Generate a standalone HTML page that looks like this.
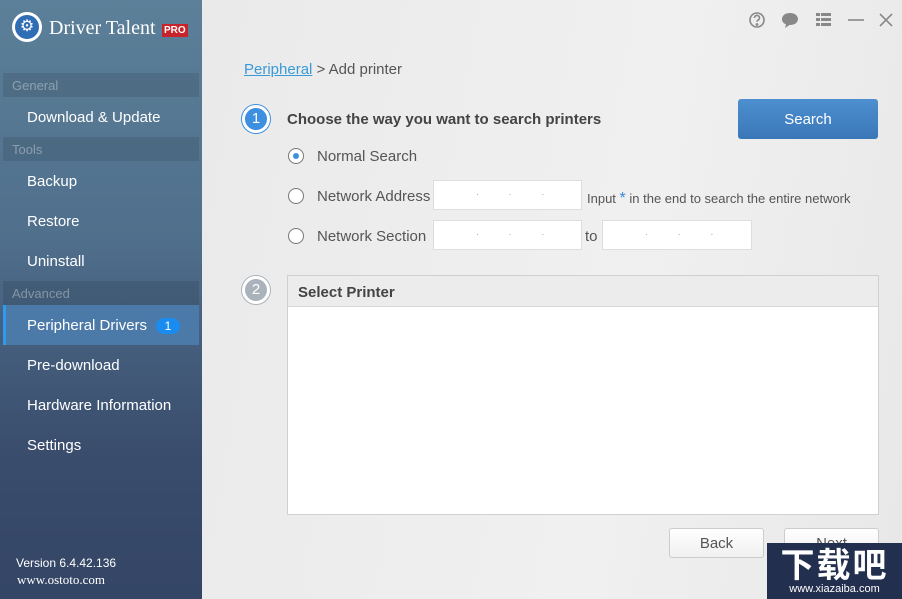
<!DOCTYPE html>
<html><head><meta charset="utf-8"><style>
*{margin:0;padding:0;box-sizing:border-box}
body{width:902px;height:599px;overflow:hidden;font-family:"Liberation Sans",sans-serif;background:#ececec;position:relative}
.side{position:absolute;left:0;top:0;width:202px;height:599px;background:linear-gradient(#5c8099 0%,#4f6f8c 40%,#3a4d6d 75%,#344565 100%)}
.sec{position:absolute;left:3px;width:196px;height:24px;background:rgba(0,0,0,.1);color:rgba(255,255,255,.35);font-size:13px;padding:5px 9px}
.it{position:absolute;left:27px;color:#fff;font-size:15px}
.main{position:absolute;left:202px;top:0;right:0;bottom:0;background:linear-gradient(100deg,#eaeaea,#f0f0f0 60%,#e8e8e8)}
.t{position:absolute;font-size:15px;color:#555;white-space:nowrap}
.in{position:absolute;background:#fff;border:1px solid #ddd;height:30px;color:#aaa;font-size:10px;letter-spacing:30px;padding:6px 0 0 42px}
.rad{position:absolute;width:16px;height:16px;border:1px solid #777;border-radius:50%;background:#fff}
.num{position:absolute;width:28px;height:28px;border-radius:50%;color:#fff;font-size:15px;text-align:center;line-height:22px;border:3px solid #fff}
.btn{position:absolute;border:1px solid #ccc;border-radius:3px;background:linear-gradient(#fff,#f0f0f0);color:#555;font-size:15px;text-align:center;line-height:30px}
</style></head><body>
<div class="side">
 <div style="position:absolute;left:12px;top:12px;width:30px;height:30px;border-radius:50%;background:#fff;padding:3px"><div style="width:24px;height:24px;border-radius:50%;background:#2f6db5;color:#fff;font-size:16px;text-align:center;line-height:24px">⚙</div></div>
 <div style="position:absolute;left:49px;top:17px;color:#fff;font-family:'Liberation Serif',serif;font-size:20px">Driver Talent</div>
 <div style="position:absolute;left:162px;top:24px;background:#c8232a;color:#fff;font-size:10px;font-weight:bold;padding:1px 2px">PRO</div>
 <div class="sec" style="top:73px">General</div>
 <div class="it" style="top:109px">Download &amp; Update</div>
 <div class="sec" style="top:137px">Tools</div>
 <div class="it" style="top:173px">Backup</div>
 <div class="it" style="top:213px">Restore</div>
 <div class="it" style="top:253px">Uninstall</div>
 <div class="sec" style="top:281px">Advanced</div>
 <div style="position:absolute;left:3px;top:305px;width:196px;height:40px;background:#4c7aa8;border-left:3px solid #2d9cf0"></div>
 <div class="it" style="top:317px">Peripheral Drivers</div>
 <div style="position:absolute;left:156px;top:318px;width:24px;height:16px;border-radius:8px;background:#1a8cf0;color:#fff;font-size:12px;text-align:center;line-height:16px">1</div>
 <div class="it" style="top:357px">Pre-download</div>
 <div class="it" style="top:397px">Hardware Information</div>
 <div class="it" style="top:437px">Settings</div>
 <div style="position:absolute;left:16px;top:556px;color:#fff;font-size:12px">Version 6.4.42.136</div>
 <div style="position:absolute;left:17px;top:572px;color:#fff;font-size:13px;font-family:'Liberation Serif',serif">www.ostoto.com</div>
</div>
<div class="main">
 <svg style="position:absolute;left:540px;top:8px" width="160" height="24" viewBox="0 0 160 24" fill="none" stroke="#888" stroke-width="1.6">
  <circle cx="15" cy="12" r="7"/><path d="M12.5 10a2.5 2.5 0 1 1 3.5 2.2c-.8.4-1 .9-1 1.6"/><circle cx="15" cy="16.5" r=".6" fill="#888"/>
  <path d="M48 5c-5 0-8 2.8-8 6s2 4.5 4 5.3L43 20l4.5-3h.5c5 0 8-2.8 8-6s-3-6-8-6z" fill="#888" stroke="none"/>
  <g fill="#888" stroke="none"><rect x="74" y="5" width="4" height="3"/><rect x="79" y="5" width="10" height="3"/><rect x="74" y="10" width="4" height="3"/><rect x="79" y="10" width="10" height="3"/><rect x="74" y="15" width="4" height="3"/><rect x="79" y="15" width="10" height="3"/></g>
  <path d="M106 12h16"/><path d="M138 6l12 12M150 6l-12 12"/>
 </svg>
 <div class="t" style="left:42px;top:61px"><span style="color:#3a9ad9;text-decoration:underline">Peripheral</span> &gt; Add printer</div>
 <div class="num" style="left:40px;top:105px;background:#3d8fe0;box-shadow:0 0 0 1px #3d8fe0">1</div>
 <div class="t" style="left:85px;top:111px;font-weight:bold;color:#444">Choose the way you want to search printers</div>
 <div style="position:absolute;left:536px;top:99px;width:140px;height:40px;background:linear-gradient(#4d8fd0,#3a77b8);border-radius:3px;color:#fff;font-size:15px;text-align:center;line-height:42px">Search</div>
 <div class="rad" style="left:86px;top:148px"><div style="width:6px;height:6px;border-radius:50%;background:#3d8fe0;margin:4px"></div></div>
 <div class="t" style="left:115px;top:148px">Normal Search</div>
 <div class="rad" style="left:86px;top:188px"></div>
 <div class="t" style="left:115px;top:188px">Network Address</div>
 <div class="in" style="left:231px;top:180px;width:149px">...</div>
 <div class="t" style="left:385px;top:190px;font-size:13px">Input <span style="color:#3a8ad9;font-size:16px">*</span> in the end to search the entire network</div>
 <div class="rad" style="left:86px;top:228px"></div>
 <div class="t" style="left:115px;top:228px">Network Section</div>
 <div class="in" style="left:231px;top:220px;width:149px">...</div>
 <div class="t" style="left:383px;top:228px">to</div>
 <div class="in" style="left:400px;top:220px;width:150px">...</div>
 <div class="num" style="left:40px;top:276px;background:#aab3bb;box-shadow:0 0 0 1px #aab3bb">2</div>
 <div style="position:absolute;left:85px;top:275px;width:592px;height:240px;border:1px solid #d0d0d0;background:#fff">
  <div style="height:31px;background:#ececec;border-bottom:1px solid #d8d8d8;font-weight:bold;color:#444;font-size:15px;padding:8px 10px">Select Printer</div>
 </div>
 <div class="btn" style="left:467px;top:528px;width:95px;height:30px">Back</div>
 <div class="btn" style="left:582px;top:528px;width:95px;height:30px">Next</div>
 <div style="position:absolute;left:565px;top:543px;width:135px;height:56px;background:#232f4e;color:#fff;text-align:center">
  <div style="font-family:'Noto Sans CJK SC',sans-serif;font-size:34px;font-weight:bold;line-height:40px;letter-spacing:2px">下载吧</div>
  <div style="font-size:11px;line-height:12px">www.xiazaiba.com</div>
 </div>
</div>
</body></html>
